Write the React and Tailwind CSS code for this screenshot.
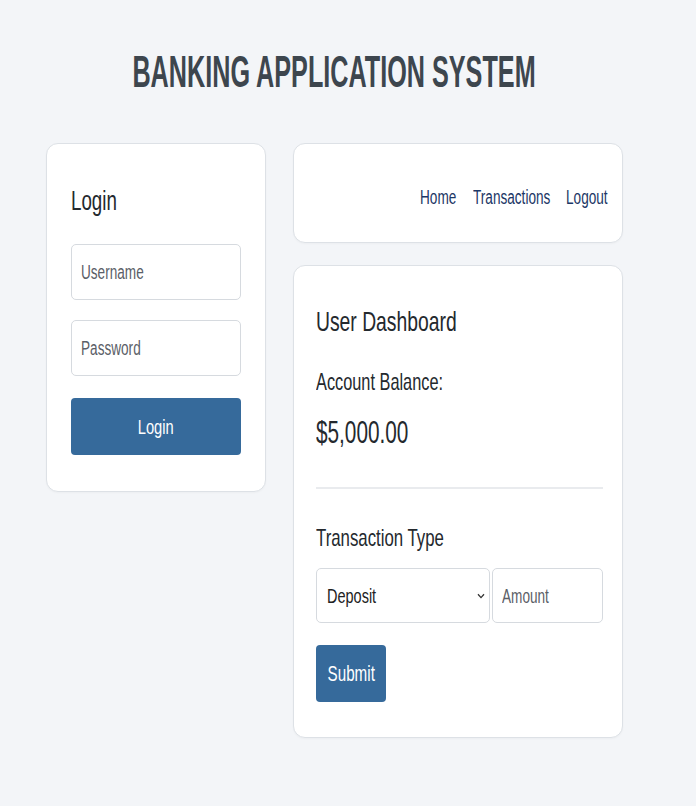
import React from "react";

// text in the reference is rendered in a very condensed face; squeeze Liberation Sans to match
const Narrow = ({ scale, origin = "origin-left", className = "", children }) => (
  <span className={`inline-block whitespace-nowrap ${origin} ${scale} ${className}`}>
    {children}
  </span>
);

const Field = ({ children, className = "", textClass = "text-[#5b6067]", scale = "scale-x-[0.68]" }) => (
  <div
    className={`flex items-center rounded-[5px] border border-[#d6dadf] bg-white pl-[9px] ${className}`}
  >
    <Narrow scale={scale} className={`text-[20px] leading-[20px] ${textClass}`}>
      {children}
    </Narrow>
  </div>
);

const Card = ({ className = "", children }) => (
  <div
    className={`rounded-[12px] border border-[#dde1e6] bg-white shadow-[0_1px_2px_rgba(0,0,0,0.03)] ${className}`}
  >
    {children}
  </div>
);

const LoginCard = () => (
  <Card className="w-[220px] px-[24px] pt-[43px] pb-[36px]">
    <h2 className="text-[28px] leading-[28px] text-[#24292e]">
      <Narrow scale="scale-x-[0.67]">Login</Narrow>
    </h2>
    <Field className="mt-[29px] h-[56px]">Username</Field>
    <Field className="mt-[20px] h-[56px]">Password</Field>
    <button className="mt-[22px] flex h-[57px] w-full items-center justify-center rounded-[4px] bg-[#366a9b] text-white">
      <Narrow scale="scale-x-[0.70]" origin="origin-center" className="text-[21px] leading-[21px]">
        Login
      </Narrow>
    </button>
  </Card>
);

const NavCard = () => (
  <Card className="h-[100px] pt-[43px] pr-[14px]">
    <nav className="flex justify-end text-[20px] leading-[20px] text-[#1c3766]">
      <a className="w-[36px]">
        <Narrow scale="scale-x-[0.68]">Home</Narrow>
      </a>
      <a className="ml-[17px] w-[78px]">
        <Narrow scale="scale-x-[0.68]">Transactions</Narrow>
      </a>
      <a className="ml-[15px] w-[42px]">
        <Narrow scale="scale-x-[0.68]">Logout</Narrow>
      </a>
    </nav>
  </Card>
);

const DashboardCard = () => (
  <Card className="mt-[22px] pl-[22px] pr-[19px] pt-[42px] pb-[35px]">
    <h2 className="text-[28px] leading-[28px] text-[#24292e]">
      <Narrow scale="scale-x-[0.69]">User Dashboard</Narrow>
    </h2>
    <p className="mt-[34px] text-[24px] leading-[24px] text-[#24292e]">
      <Narrow scale="scale-x-[0.68]">Account Balance:</Narrow>
    </p>
    <p className="mt-[23px] text-[31px] leading-[31px] text-[#24292e]">
      <Narrow scale="scale-x-[0.67]">$5,000.00</Narrow>
    </p>
    <div className="mt-[39px] h-[2px] bg-[#e9ebee]" />
    <p className="mt-[37px] text-[24px] leading-[24px] text-[#24292e]">
      <Narrow scale="scale-x-[0.70]">Transaction Type</Narrow>
    </p>
    <div className="mt-[18px] flex gap-[2px]">
      <div className="relative flex h-[55px] w-[174px] items-center rounded-[5px] border border-[#d6dadf] bg-white pl-[10px]">
        <Narrow scale="scale-x-[0.69]" className="text-[21px] leading-[21px] text-[#222]">
          Deposit
        </Narrow>
        <svg
          className="absolute right-[4px] top-[24px] h-[6px] w-[8px]"
          viewBox="0 0 8 6"
          fill="none"
          stroke="#333"
          strokeWidth="1.3"
        >
          <path d="M1 1.2 4 4.6 7 1.2" />
        </svg>
      </div>
      <Field className="h-[55px] w-[111px]">Amount</Field>
    </div>
    <button className="mt-[22px] flex h-[57px] w-[70px] items-center justify-center rounded-[4px] bg-[#366a9b] text-white">
      <Narrow scale="scale-x-[0.69]" origin="origin-center" className="text-[22px] leading-[22px]">
        Submit
      </Narrow>
    </button>
  </Card>
);

export default function App() {
  return (
    <div className="min-h-[806px] w-full bg-[#f3f5f8] font-['Liberation_Sans',Arial,sans-serif]">
      <div className="ml-[46px] w-[577px] pt-[49px]">
        <div className="flex justify-center">
          <h1 className="text-[45px] font-bold leading-[45px] text-[#3d464e]">
            <Narrow scale="scale-x-[0.56]" origin="origin-center">
              BANKING APPLICATION SYSTEM
            </Narrow>
          </h1>
        </div>
        <div className="mt-[49px] flex items-start gap-[27px]">
          <LoginCard />
          <div className="w-[330px]">
            <NavCard />
            <DashboardCard />
          </div>
        </div>
      </div>
    </div>
  );
}
